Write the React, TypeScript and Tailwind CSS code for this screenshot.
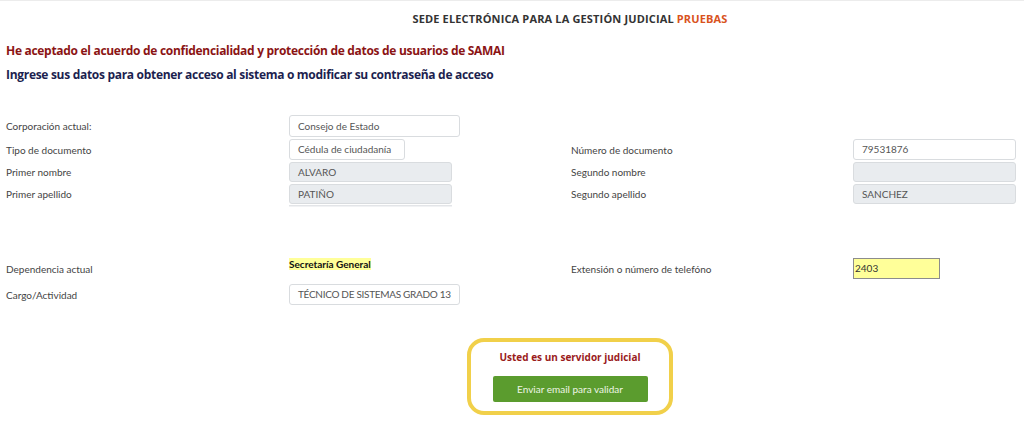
import React from "react";

const lato = { fontFamily: 'Lato, "Open Sans", sans-serif' };

const inputBase =
  "h-full rounded-[3px] border border-[#d9dcdf] px-[8px] flex items-center text-[10px] text-[#555] whitespace-nowrap overflow-hidden";

function Label({ children }: { children: React.ReactNode }) {
  return (
    <div className="text-[10px] text-[#444] leading-none whitespace-nowrap" style={lato}>
      {children}
    </div>
  );
}

function Field({ w, bg, extra = "", children }: { w: string; bg: string; extra?: string; children?: React.ReactNode }) {
  return (
    <div className={`${inputBase} ${w} ${bg} ${extra}`} style={lato}>
      {children}
    </div>
  );
}

export default function App() {
  return (
    <div
      className="w-[1024px] h-[438px] bg-white border-t border-[#ececec] overflow-hidden"
      style={{ fontFamily: '"Open Sans", "Noto Sans", sans-serif' }}
    >
      <div className="pl-[116px] pt-[11px] flex justify-center">
        <div className="text-[11px] font-bold text-[#333] leading-[14px] tracking-[0.15px] whitespace-nowrap">
          SEDE ELECTRÓNICA PARA LA GESTIÓN JUDICIAL <span className="text-[#d9531e]">PRUEBAS</span>
        </div>
      </div>

      <div className="pl-[6px] mt-[17px] text-[12px] font-bold leading-[16px] text-[#8b1414] tracking-[-0.3px] whitespace-nowrap">
        He aceptado el acuerdo de confidencialidad y protección de datos de usuarios de SAMAI
      </div>
      <div className="pl-[6px] mt-[8px] text-[12px] font-bold leading-[16px] text-[#1c1f4f] tracking-[-0.3px] whitespace-nowrap">
        Ingrese sus datos para obtener acceso al sistema o modificar su contraseña de acceso
      </div>

      <div className="pl-[6px] mt-[32px] flex flex-col">
        <div className="grid grid-cols-[283px_282px_282px_163px] items-center h-[22px]">
          <Label>Corporación actual:</Label>
          <Field w="w-[171px]" bg="bg-white">Consejo de Estado</Field>
          <div />
          <div />
        </div>
        <div className="grid grid-cols-[283px_282px_282px_163px] items-center h-[21px] mt-[2px]">
          <Label>Tipo de documento</Label>
          <Field w="w-[116px]" bg="bg-white">Cédula de ciudadanía</Field>
          <Label>Número de documento</Label>
          <Field w="w-[163px]" bg="bg-white">79531876</Field>
        </div>
        <div className="grid grid-cols-[283px_282px_282px_163px] items-center h-[20px] mt-[2px]">
          <Label>Primer nombre</Label>
          <Field w="w-[163px]" bg="bg-[#e9ecef]">ALVARO</Field>
          <Label>Segundo nombre</Label>
          <Field w="w-[163px]" bg="bg-[#e9ecef]" />
        </div>
        <div className="grid grid-cols-[283px_282px_282px_163px] items-center h-[20px] mt-[2px]">
          <Label>Primer apellido</Label>
          <Field w="w-[163px]" bg="bg-[#e9ecef]">PATIÑO</Field>
          <Label>Segundo apellido</Label>
          <Field w="w-[163px]" bg="bg-[#e9ecef]">SANCHEZ</Field>
        </div>
        <div className="grid grid-cols-[283px_282px_282px_163px] h-[2px] mt-[1px]">
          <div />
          <div className="w-[163px] h-[2px] border-t border-[#e3e5e8] bg-[#f1f2f4]" />
        </div>

        <div className="grid grid-cols-[283px_282px_282px_163px] items-center h-[21px] mt-[51px]">
          <Label>Dependencia actual</Label>
          <div className="self-start flex">
            <span
              className="bg-[#ffff99] text-[10px] font-bold text-[#111] leading-[12px] whitespace-nowrap"
              style={lato}
            >
              Secretaría General
            </span>
          </div>
          <Label>Extensión o número de telefóno</Label>
          <div
            className="w-[87px] h-full border border-[#8c8c8c] bg-[#ffff99] flex items-center pl-[1px] text-[10px] text-[#333]"
            style={lato}
          >
            2403
          </div>
        </div>
        <div className="grid grid-cols-[283px_282px_282px_163px] items-center h-[21px] mt-[5px]">
          <Label>Cargo/Actividad</Label>
          <Field w="w-[171px]" bg="bg-white" extra="text-[9.5px] tracking-[-0.3px]">
            TÉCNICO DE SISTEMAS GRADO 13
          </Field>
          <div />
          <div />
        </div>
      </div>

      <div className="pl-[116px] mt-[33px] flex justify-center">
        <div className="w-[206px] h-[77px] rounded-[17px] border-[4px] border-[#f1d04a] flex flex-col items-center pt-[9px]">
          <div className="text-[10px] font-bold text-[#9a1b1b] leading-[12px] whitespace-nowrap">
            Usted es un servidor judicial
          </div>
          <div
            className="mt-[13px] w-[155px] h-[26px] rounded-[2px] bg-[#5b9c2e] flex items-center justify-center text-[10px] text-[#eef5e6] whitespace-nowrap"
            style={lato}
          >
            Enviar email para validar
          </div>
        </div>
      </div>
    </div>
  );
}
